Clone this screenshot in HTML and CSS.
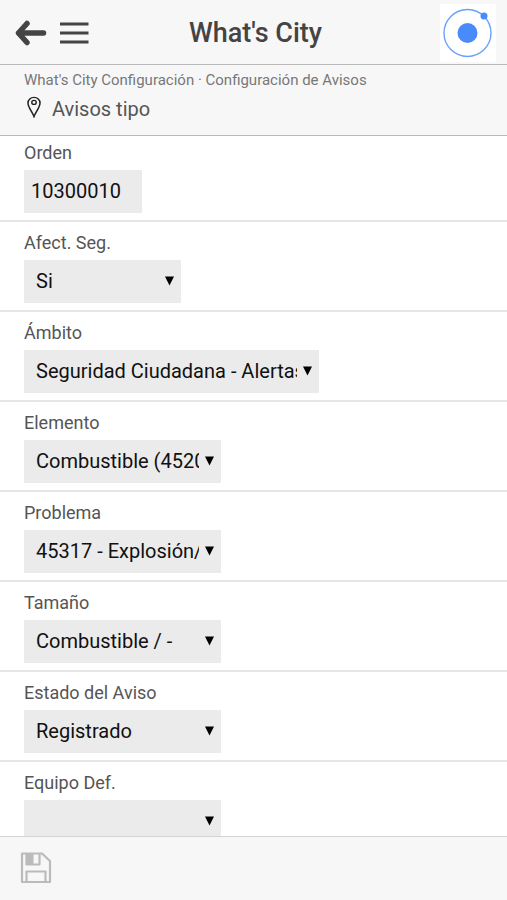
FILE: index.html
```html
<!DOCTYPE html>
<html lang="es">
<head>
<meta charset="utf-8">
<meta name="viewport" content="width=device-width, initial-scale=1">
<title>What's City</title>
<link rel="stylesheet" href="styles.css">
</head>
<body>
<header class="topbar">
  <div class="topbar-side">
    <button class="icon-button" type="button" aria-label="Volver">
      <svg width="32" height="26" viewBox="0 0 32 26" fill="none" stroke="#444" stroke-linecap="round" stroke-linejoin="round"><path d="M4 13H28.500" stroke-width="5.500"/><path d="M12 3.500L3.500 13L12 22.500" stroke-width="5.500"/></svg>
    </button>
    <button class="icon-button" type="button" aria-label="Menú">
      <svg width="29" height="22" viewBox="0 0 29 22" fill="#444"><path d="M0 .5h28.500v3H0zM0 9.500h28.500v3H0zM0 18.500h28.500v3H0z"/></svg>
    </button>
  </div>
  <h1 class="title">What's City</h1>
  <div class="topbar-side topbar-end">
    <svg class="logo" viewBox="0 0 56 58" role="img" aria-label="Logotipo"><circle cx="27.500" cy="29" r="23.500" fill="none" stroke="#6ba0fa" stroke-width="1.400"/><circle cx="27.500" cy="29" r="10" fill="#4a8bfc"/><circle cx="44" cy="12" r="3.500" fill="#4a8bfc"/></svg>
  </div>
</header>
<section class="subheader">
  <p class="breadcrumb">What's City Configuración · Configuración de Avisos</p>
  <h2 class="section-title">
    <svg width="14" height="22" viewBox="0 0 14 24" preserveAspectRatio="none" fill="none" stroke="#222"><path d="M7 22.500C5.500 17.500 1 12.500 1 7.500a6 6 0 0 1 12 0C13 12.500 8.500 17.500 7 22.500Z" stroke-width="1.500"/><circle cx="7" cy="7" r="2.200" stroke-width="1.400"/></svg>
    <span>Avisos tipo</span>
  </h2>
</section>
<main class="content">
  <form id="aviso" class="form">
    <div class="row">
      <label for="orden">Orden</label>
      <input id="orden" class="control order" type="text" value="10300010">
    </div>
    <div class="row">
      <label for="afect">Afect. Seg.</label>
      <div class="picker small"><select id="afect" class="control"><option>Si</option></select><svg class="caret" viewBox="0 0 9 10"><path d="M0 .5h9L4.500 9.500z"/></svg></div>
    </div>
    <div class="row">
      <label for="ambito">Ámbito</label>
      <div class="picker large"><select id="ambito" class="control"><option>Seguridad Ciudadana - Alertas</option></select><svg class="caret" viewBox="0 0 9 10"><path d="M0 .5h9L4.500 9.500z"/></svg></div>
    </div>
    <div class="row">
      <label for="elemento">Elemento</label>
      <div class="picker"><select id="elemento" class="control"><option>Combustible (4520)</option></select><svg class="caret" viewBox="0 0 9 10"><path d="M0 .5h9L4.500 9.500z"/></svg></div>
    </div>
    <div class="row">
      <label for="problema">Problema</label>
      <div class="picker"><select id="problema" class="control"><option>45317 - Explosión/</option></select><svg class="caret" viewBox="0 0 9 10"><path d="M0 .5h9L4.500 9.500z"/></svg></div>
    </div>
    <div class="row">
      <label for="tamano">Tamaño</label>
      <div class="picker"><select id="tamano" class="control"><option>Combustible / -</option></select><svg class="caret" viewBox="0 0 9 10"><path d="M0 .5h9L4.500 9.500z"/></svg></div>
    </div>
    <div class="row">
      <label for="estado">Estado del Aviso</label>
      <div class="picker"><select id="estado" class="control"><option>Registrado</option></select><svg class="caret" viewBox="0 0 9 10"><path d="M0 .5h9L4.500 9.500z"/></svg></div>
    </div>
    <div class="row">
      <label for="equipo">Equipo Def.</label>
      <div class="picker"><select id="equipo" class="control"><option></option></select><svg class="caret" viewBox="0 0 9 10"><path d="M0 .5h9L4.500 9.500z"/></svg></div>
    </div>
  </form>
</main>
<footer class="toolbar">
  <button class="icon-button" type="submit" form="aviso" aria-label="Guardar">
    <svg width="32" height="32" viewBox="0 0 32 32" fill="none" stroke="#bbb" stroke-width="2.200" stroke-linejoin="round"><path d="M2 1.500H22L30 9V30H2Z"/><path d="M6.500 1.500V12.500H19.500V1.500"/><path d="M7 2H13.500V12H7Z" fill="#bbb" stroke="none"/><path d="M6.500 30V19.500H25.500V30"/></svg>
  </button>
</footer>
</body>
</html>
```

FILE: styles.css
```css
* {
  box-sizing: border-box;
}

body {
  margin: 0;
  height: 100vh;
  display: flex;
  flex-direction: column;
  background: #fff;
  color: #444;
  font-family: Roboto, "Liberation Sans", sans-serif;
}

h1, h2, p {
  margin: 0;
}

svg {
  display: block;
}

.topbar {
  display: flex;
  align-items: center;
  padding: 4px 11px 2px 15px;
  background: #f7f7f7;
  border-bottom: 1px solid #bbb;
}

.topbar-side {
  flex: 1;
  display: flex;
  align-items: center;
  gap: 13px;
}

.topbar-end {
  justify-content: flex-end;
}

.icon-button {
  padding: 0;
  border: 0;
  background: none;
}

.title {
  font-size: 27px;
  line-height: 32px;
  font-weight: 500;
}

.logo {
  width: 56px;
  height: 58px;
  background: #fff;
}

.subheader {
  padding: 5px 24px 9px;
  background: #f7f7f7;
  border-bottom: 1px solid #bbb;
}

.breadcrumb {
  font-size: 15px;
  line-height: 20px;
  color: #777;
}

.section-title {
  display: flex;
  align-items: flex-start;
  gap: 11px;
  padding: 6px 3px 4px;
  font-size: 20px;
  line-height: 26px;
  font-weight: 400;
  color: #555;
}

.content {
  flex: 1;
  min-height: 0;
  overflow-y: auto;
  scrollbar-width: none;
}

.row {
  padding: 9px 24px 7px;
  border-bottom: 2px solid #e6e6e6;
}

.row:first-child {
  padding-top: 5px;
}

label {
  display: block;
  margin-bottom: 5px;
  font-size: 18px;
  line-height: 24px;
  color: #555;
}

.control {
  display: block;
  width: 100%;
  height: 43px;
  margin: 0;
  padding: 0 22px 2px 12px;
  border: 0;
  border-radius: 0;
  appearance: none;
  background: #ebebeb;
  color: #111;
  font-family: inherit;
  font-size: 20px;
}

.order {
  width: 118px;
  padding: 0 7px 2px;
}

.picker {
  position: relative;
  width: 197px;
  max-width: 100%;
}

.picker.small {
  width: 157px;
}

.picker.large {
  width: 295px;
}

.caret {
  position: absolute;
  top: 16px;
  right: 7px;
  width: 9px;
  height: 10px;
  fill: #000;
  pointer-events: none;
}

.toolbar {
  display: flex;
  align-items: center;
  height: 64px;
  padding: 0 20px 2px;
  background: #f7f7f7;
  border-top: 1px solid #d4d4d4;
}
```
